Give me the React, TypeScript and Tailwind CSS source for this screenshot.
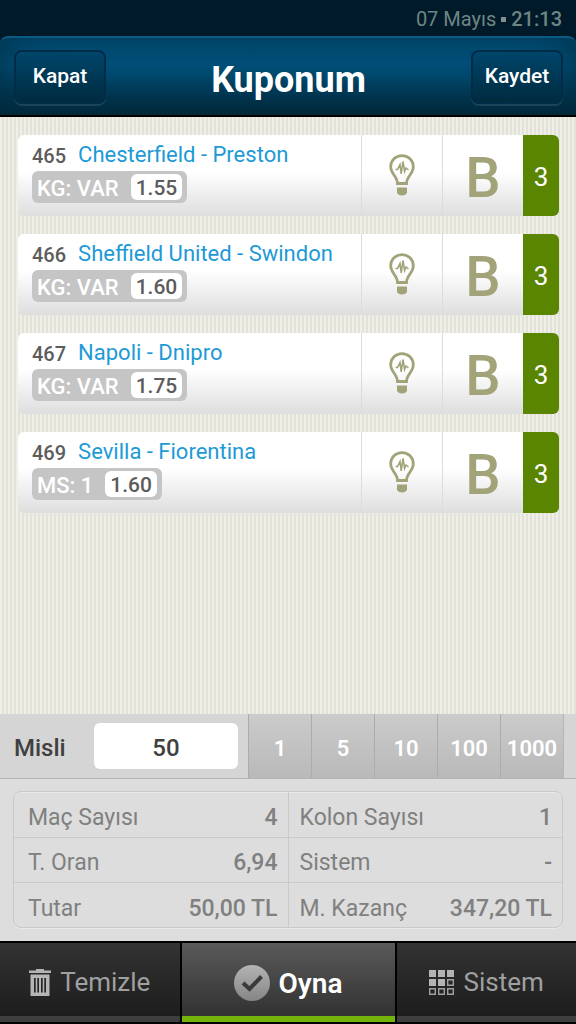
import type { ReactNode } from 'react';

const matches = [
  { code: '465', teams: 'Chesterfield - Preston', bet: 'KG: VAR', odds: '1.55' },
  { code: '466', teams: 'Sheffield United - Swindon', bet: 'KG: VAR', odds: '1.60' },
  { code: '467', teams: 'Napoli - Dnipro', bet: 'KG: VAR', odds: '1.75' },
  { code: '469', teams: 'Sevilla - Fiorentina', bet: 'MS: 1', odds: '1.60' },
];

const multipliers = ['1', '5', '10', '100', '1000'];

const summary = [
  ['Maç Sayısı', '4', 'Kolon Sayısı', '1'],
  ['T. Oran', '6,94', 'Sistem', '-'],
  ['Tutar', '50,00 TL', 'M. Kazanç', '347,20 TL'],
];

function BulbIcon() {
  return (
    <svg width="26" height="43" viewBox="0 0 26 43" fill="none" stroke="#a3a37a" aria-hidden="true">
      <path
        d="M8.5 29.5C8.5 22.5 1.7 20 1.7 12.8C1.7 6.4 6.7 1.7 13 1.7S24.3 6.4 24.3 12.8C24.3 20 17.5 22.5 17.5 29.5Z"
        strokeWidth="2.8"
      />
      <path d="M6.5 15.5H8.5L11 10.5L12.2 20L14 7.5L15.6 17.5L17 14L19.5 16" strokeWidth="1.6" />
      <path d="M8 33.5H18V38.5C18 40 16 41.5 13 41.5S8 40 8 38.5Z" fill="#a3a37a" stroke="none" />
    </svg>
  );
}

function TrashIcon() {
  return (
    <svg width="22" height="28" viewBox="0 0 22 28" fill="#b4b4b4" className="shrink-0" aria-hidden="true">
      <path d="M7 0H15V1.5H22V4H0V1.5H7Z" />
      <path
        fillRule="evenodd"
        d="M1.5 5.5H20.5V27H1.5ZM5 9V23.5H6.7V9ZM8.3 9V23.5H10V9ZM12 9V23.5H13.7V9ZM15.3 9V23.5H17V9Z"
      />
    </svg>
  );
}

function CheckIcon() {
  return (
    <svg width="36" height="38" viewBox="0 0 36 38" aria-hidden="true">
      <defs>
        <linearGradient id="disc" x1="0" y1="0" x2="0" y2="1">
          <stop offset="0" stopColor="#b4b4b4" />
          <stop offset="1" stopColor="#858585" />
        </linearGradient>
      </defs>
      <circle cx="18" cy="19" r="18" fill="url(#disc)" />
      <path d="M9 19L15.5 25L27.5 12.5" fill="none" stroke="#3a3a3a" strokeWidth="4" />
    </svg>
  );
}

function GridIcon() {
  return (
    <svg width="26" height="26" viewBox="0 0 26 26" className="shrink-0" aria-hidden="true">
      <path d="M0 0H7V7H0ZM9 0H16V7H9ZM18 0H25V7H18ZM0 9H7V16H0ZM9 9H16V16H9Z" fill="#b4b4b4" />
      <path
        d="M18.7 9.7H24.3V15.3H18.7ZM0.7 18.7H6.3V24.3H0.7ZM9.7 18.7H15.3V24.3H9.7ZM18.7 18.7H24.3V24.3H18.7Z"
        fill="none"
        stroke="#a0a0a0"
        strokeWidth="1.4"
      />
    </svg>
  );
}

function HeaderButton({ children }: { children: ReactNode }) {
  return (
    <button className="h-[54px] w-[92px] rounded-lg border-2 border-[#002c47] bg-linear-to-b from-[#00466b] to-[#002b40] text-[21px] font-medium shadow-[0_2px_0_#1b4458]">
      {children}
    </button>
  );
}

function MatchCard({ code, teams, bet, odds }: (typeof matches)[number]) {
  return (
    <li className="flex h-[81px] overflow-hidden rounded-md bg-linear-to-b from-white from-45% to-[#dededf]">
      <div className="flex min-w-0 flex-1 flex-col items-start pt-1 pl-[14px]">
        <div className="flex h-8 items-center gap-3 text-xl whitespace-nowrap">
          <span className="pt-[2px] font-medium text-[#5c5c5c]">{code}</span>
          <span className="text-[22px] text-[#1d9ad6]">{teams}</span>
        </div>
        <div className="flex h-8 items-center gap-3 rounded-md bg-[#c5c5c5] px-[5px] text-[22px]">
          <span className="pt-[2px] font-medium text-white">{bet}</span>
          <span className="rounded-md bg-white px-[5px] pt-[2px] text-[21px] leading-6 font-medium text-[#5c5c5c]">
            {odds}
          </span>
        </div>
      </div>
      <div className="flex w-[81px] items-center justify-center border-l border-[#dcdcdc]">
        <BulbIcon />
      </div>
      <div className="flex w-[81px] items-center justify-center border-l border-[#dcdcdc] pt-1 text-[56px] font-medium text-[#a3a37a]">
        B
      </div>
      <div className="flex w-9 items-center justify-center bg-[#5a8500] pt-1 text-[26px] text-white">3</div>
    </li>
  );
}

export default function App() {
  return (
    <div className="flex min-h-screen flex-col bg-[#011a2a] font-[Roboto,sans-serif]">
      <div className="flex h-9 items-center justify-end gap-[5px] pt-[2px] pr-[14px] text-xl text-[#6f8583]">
        <span>07 Mayıs</span>
        <span className="size-[5px] bg-[#7f918c]" />
        <span className="font-medium">21:13</span>
      </div>

      <header className="flex h-[81px] items-center justify-between rounded-t-lg border-t-2 border-b-2 border-t-[#0a5a82] border-b-black bg-linear-to-b from-[#004c75] via-[#005079] via-35% to-[#00293b] pr-[13px] pl-[14px] text-white shadow-[inset_24px_0_40px_-16px_#00293b99,inset_-24px_0_40px_-16px_#00293b99]">
        <HeaderButton>Kapat</HeaderButton>
        <h1 className="pt-[6px] text-[36px] font-bold">Kuponum</h1>
        <HeaderButton>Kaydet</HeaderButton>
      </header>

      <main className="flex-1 bg-[repeating-linear-gradient(90deg,#efeee7_0_2px,#e3e2d9_2px_4px)] pt-[18px] pr-[17px] pl-[18px]">
        <ul className="flex flex-col gap-[18px]">
          {matches.map((match) => (
            <MatchCard key={match.code} {...match} />
          ))}
        </ul>
      </main>

      <div className="flex h-[65px] items-center border-b border-[#b4b4b4] bg-[#d5d5d5] pr-3">
        <label htmlFor="misli" className="w-[94px] pt-1 pl-[14px] text-2xl font-medium text-[#404040]">
          Misli
        </label>
        <input
          id="misli"
          defaultValue="50"
          className="h-[46px] min-w-0 flex-1 rounded-md bg-white pt-1 text-center text-2xl font-medium text-[#404040]"
        />
        <div className="ml-[10px] flex h-full border-r border-[#b4b4b4]">
          {multipliers.map((value) => (
            <button
              key={value}
              className="w-[63px] border-l border-[#acacac] bg-linear-to-b from-[#cbcbcb] to-[#b9b9b9] pt-1 text-[22px] font-semibold text-white"
            >
              {value}
            </button>
          ))}
        </div>
      </div>

      <section className="bg-[#dddddd] px-[13px] pt-3 pb-[13px]">
        <div className="overflow-hidden rounded-lg border border-[#c9c9c9] shadow-[0_1px_0_#e9e9e9,inset_0_1px_0_#e9e9e9]">
          <table className="w-full table-fixed text-[23px] text-[#808080]">
            <colgroup>
              <col className="w-[25%]" />
              <col className="w-[25%]" />
              <col className="w-[25%]" />
              <col className="w-[25%]" />
            </colgroup>
            <tbody>
              {summary.map(([label, value, label2, value2]) => (
                <tr key={label} className="h-[45px] border-b border-[#c9c9c9] whitespace-nowrap last:border-b-0">
                  <th className="pt-2 pl-[14px] text-left font-normal">{label}</th>
                  <td className="pt-2 pr-[10px] text-right font-medium">{value}</td>
                  <th className="border-l border-[#c9c9c9] pt-2 pl-[11px] text-left font-normal">{label2}</th>
                  <td className="pt-2 pr-[10px] text-right font-medium">{value2}</td>
                </tr>
              ))}
            </tbody>
          </table>
        </div>
      </section>

      <nav className="flex h-[83px] gap-[2px] border-y-2 border-black bg-black text-[26px]">
        <button className="flex flex-1 items-center justify-center gap-[9px] border-b-[6px] border-[#3e3e3e] bg-linear-to-b from-[#333333] to-[#1d1d1d] pt-[6px] text-[#a0a0a0]">
          <TrashIcon />
          Temizle
        </button>
        <button className="flex w-[213px] items-center justify-center gap-[9px] border-b-[6px] border-[#74b30a] bg-linear-to-b from-[#5a5a5a] to-[#323232] pt-[6px] text-[28px] font-semibold text-white">
          <CheckIcon />
          <span className="pt-[2px]">Oyna</span>
        </button>
        <button className="flex flex-1 items-center justify-center gap-[9px] border-b-[6px] border-[#3e3e3e] bg-linear-to-b from-[#333333] to-[#1d1d1d] pt-[6px] text-[#a0a0a0]">
          <GridIcon />
          Sistem
        </button>
      </nav>
    </div>
  );
}
